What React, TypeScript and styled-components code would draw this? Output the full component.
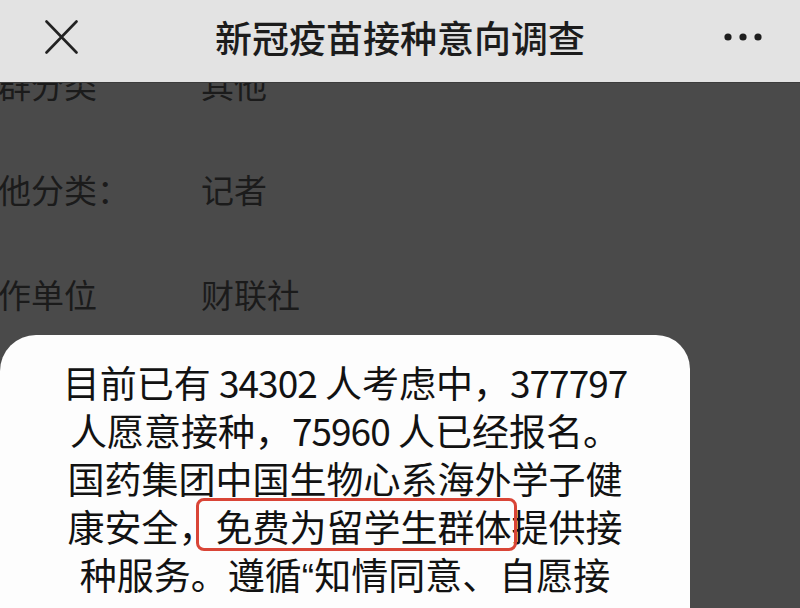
import React from "react";
import styled, { createGlobalStyle } from "styled-components";

const Global = createGlobalStyle`
  html, body { margin: 0; padding: 0; background: #4a4a4a; }
  body { font-family: "Noto Sans CJK SC", "Noto Sans", sans-serif; }
  #root { width: 800px; height: 608px; overflow: hidden; }
`;

const Screen = styled.div`
  width: 800px;
  height: 608px;
  display: flex;
  flex-direction: column;
  overflow: hidden;
`;

const Header = styled.header`
  flex: 0 0 83px;
  height: 83px;
  background: #e3e3e3;
  display: grid;
  grid-template-columns: 120px 1fr 120px;
  align-items: center;
  border-bottom: 1px solid #3c3c3c;
  box-sizing: border-box;
`;

const IconButton = styled.button<{ $align: "start" | "end" }>`
  all: unset;
  display: flex;
  justify-content: ${(p) => (p.$align === "start" ? "flex-start" : "flex-end")};
  align-items: center;
  padding: ${(p) => (p.$align === "start" ? "0 0 0 45px" : "0 38px 0 0")};
  height: 100%;
`;

const Title = styled.h1`
  margin: 0;
  text-align: center;
  font-size: 37px;
  font-weight: 500;
  color: #1c1c1c;
  letter-spacing: 0;
  line-height: 1;
  padding-bottom: 8px;
`;

const Body = styled.main`
  position: relative;
  flex: 1;
  background: #4a4a4a;
  overflow: hidden;
`;

const Rows = styled.div`
  display: flex;
  flex-direction: column;
  margin: -51px 0 0 -35px;
`;

const Row = styled.div`
  display: grid;
  grid-template-columns: 236px 1fr;
  align-items: center;
  height: 105px;
  font-size: 33px;
  color: #1b1b1b;
  line-height: 1;
`;

const Label = styled.span``;
const Value = styled.span``;

const Dialog = styled.section`
  position: absolute;
  left: 0;
  top: 252px;
  width: 690px;
  height: 400px;
  background: #fdfdfd;
  border-radius: 36px 34px 0 0;
  box-sizing: border-box;
  padding: 23px 0 0 0;
`;

const Message = styled.p`
  margin: 0;
  text-align: center;
  font-size: 37px;
  line-height: 48px;
  color: #121212;
`;

const Num = styled.span`
  letter-spacing: -1px;
`;

const Quote = styled.span`
  font-family: "Liberation Sans", sans-serif;
`;

const Highlight = styled.span`
  position: relative;
  &::after {
    content: "";
    position: absolute;
    left: -20px;
    right: -5px;
    top: -1px;
    bottom: 2px;
    border: 3px solid #d94537;
    border-radius: 8px;
    pointer-events: none;
  }
`;

const CloseIcon = () => (
  <svg width="33" height="34" viewBox="0 0 33 34" style={{ marginBottom: 8 }}>
    <path d="M1.5 1.5 L31.5 32.5 M31.5 1.5 L1.5 32.5" stroke="#222" strokeWidth="2.6" strokeLinecap="round" fill="none" />
  </svg>
);

const MoreIcon = () => (
  <svg width="38" height="10" viewBox="0 0 38 10" style={{ marginBottom: 8 }}>
    <circle cx="4" cy="5" r="3.6" fill="#1e1e1e" />
    <circle cx="19" cy="5" r="3.6" fill="#1e1e1e" />
    <circle cx="34" cy="5" r="3.6" fill="#1e1e1e" />
  </svg>
);

const rows = [
  { label: "人群分类", value: "其他" },
  { label: "其他分类：", value: "记者" },
  { label: "工作单位", value: "财联社" },
];

export default function App() {
  return (
    <>
      <Global />
      <Screen>
        <Header>
          <IconButton $align="start" aria-label="关闭">
            <CloseIcon />
          </IconButton>
          <Title>新冠疫苗接种意向调查</Title>
          <IconButton $align="end" aria-label="更多">
            <MoreIcon />
          </IconButton>
        </Header>
        <Body>
          <Rows>
            {rows.map((r) => (
              <Row key={r.label}>
                <Label>{r.label}</Label>
                <Value>{r.value}</Value>
              </Row>
            ))}
          </Rows>
          <Dialog>
            <Message>
              目前已有 <Num>34302</Num> 人考虑中，<Num>377797</Num>
              <br />
              人愿意接种，<Num>75960</Num> 人已经报名。
              <br />
              国药集团中国生物心系海外学子健
              <br />
              康安全，<Highlight>免费为留学生群体</Highlight>提供接
              <br />
              种服务。遵循<Quote>“</Quote>知情同意、自愿接
            </Message>
          </Dialog>
        </Body>
      </Screen>
    </>
  );
}
